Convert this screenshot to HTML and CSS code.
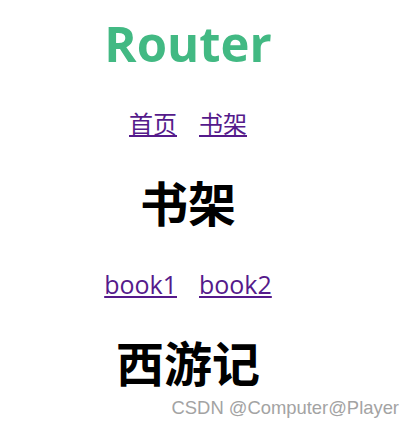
FILE: index.html
```html
<!DOCTYPE html>
<html lang="zh-CN">
<head>
<meta charset="utf-8">
<title>Router</title>
<link rel="stylesheet" href="styles.css">
</head>
<body>
<div class="app">
  <h1 class="title">Router</h1>
  <nav class="nav">
    <a href="#/">首页</a>
    <a href="#/books">书架</a>
  </nav>
  <h2 class="heading">书架</h2>
  <nav class="nav nav-books">
    <a href="#/books/1">book1</a>
    <a href="#/books/2">book2</a>
  </nav>
  <h2 class="heading heading-book">西游记</h2>
</div>
<div class="watermark">CSDN @Computer@Player</div>
</body>
</html>
```
FILE: styles.css
```css
html, body {
  margin: 0;
  padding: 0;
  background: #ffffff;
}
body {
  width: 412px;
  height: 427px;
  position: relative;
  overflow: hidden;
  font-family: "Open Sans", "Noto Sans CJK SC", sans-serif;
}
.app {
  width: 376px;
  text-align: center;
  padding-top: 18px;
}
.title {
  margin: 0;
  font-size: 49px;
  line-height: 51px;
  font-weight: 700;
  color: #42b983;
}
.nav {
  display: flex;
  justify-content: center;
  gap: 22px;
  margin-top: 40px;
  font-size: 24px;
  line-height: 30px;
}
.nav a {
  color: #551a8b;
  text-decoration: underline;
}
.heading {
  margin: 37px 0 0;
  font-size: 48px;
  line-height: 56px;
  font-weight: 700;
  color: #000000;
}
.nav-books {
  margin-top: 37px;
  font-size: 25px;
}
.heading-book {
  margin-top: 37px;
}
.watermark {
  position: absolute;
  right: 13px;
  top: 397px;
  font-family: "Liberation Sans", Arial, sans-serif;
  font-size: 18.4px;
  color: #a3a3a3;
}
```
